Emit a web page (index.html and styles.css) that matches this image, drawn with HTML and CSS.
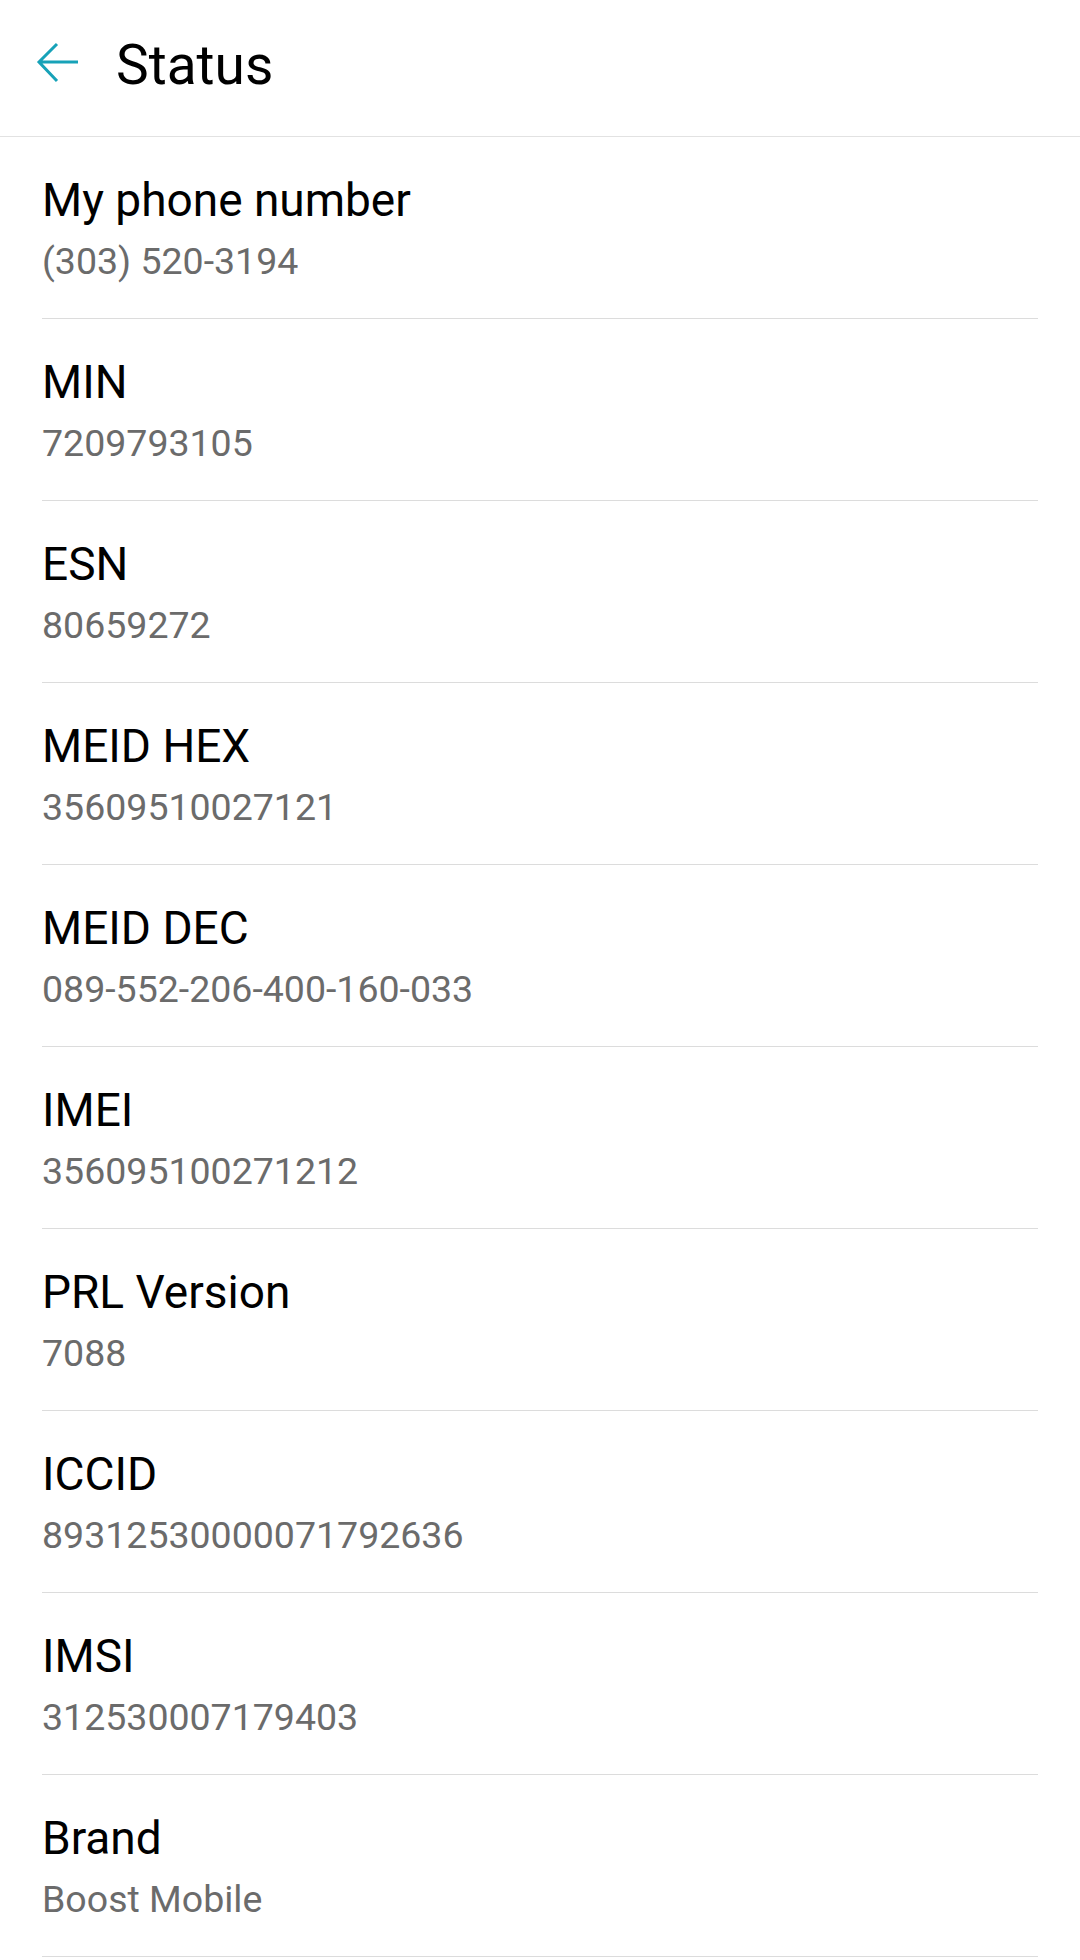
FILE: index.html
```html
<!DOCTYPE html>
<html>
<head>
<meta charset="utf-8">
<link rel="stylesheet" href="styles.css">
</head>
<body>
<header class="appbar">
  <svg class="back" width="44" height="42" viewBox="0 0 44 42">
    <path d="M42 20 H4 M21 2 L3 20 L21 39" fill="none" stroke="#17a2b8" stroke-width="3"/>
  </svg>
  <h1 class="title">Status</h1>
</header>
<main class="list">
  <div class="row"><div class="label">My phone number</div><div class="value">(303) 520-3194</div></div>
  <div class="row"><div class="label">MIN</div><div class="value">7209793105</div></div>
  <div class="row"><div class="label">ESN</div><div class="value">80659272</div></div>
  <div class="row"><div class="label">MEID HEX</div><div class="value">35609510027121</div></div>
  <div class="row"><div class="label">MEID DEC</div><div class="value">089-552-206-400-160-033</div></div>
  <div class="row"><div class="label">IMEI</div><div class="value">356095100271212</div></div>
  <div class="row"><div class="label">PRL Version</div><div class="value">7088</div></div>
  <div class="row"><div class="label">ICCID</div><div class="value">89312530000071792636</div></div>
  <div class="row"><div class="label">IMSI</div><div class="value">312530007179403</div></div>
  <div class="row"><div class="label">Brand</div><div class="value">Boost Mobile</div></div>
</main>
</body>
</html>
```
FILE: styles.css
```css
html, body {
  margin: 0;
  padding: 0;
  background: #ffffff;
  font-family: Roboto, "Noto Sans", "Liberation Sans", sans-serif;
}
.appbar {
  height: 136px;
  border-bottom: 1px solid #e2e2e2;
  display: flex;
  align-items: flex-start;
}
.back {
  margin-left: 36px;
  margin-top: 42px;
  flex: none;
}
.title {
  margin: 33px 0 0 36px;
  font-size: 55px;
  line-height: 64px;
  font-weight: 400;
  color: #000;
}
.list {
  display: flex;
  flex-direction: column;
}
.row {
  margin: 0 42px;
  padding: 37px 0 33px 0;
  border-bottom: 1px solid #dcdcdc;
  display: flex;
  flex-direction: column;
}
.label {
  font-size: 46px;
  line-height: 52px;
  color: #000;
}
.value {
  margin-top: 11px;
  font-size: 37.5px;
  line-height: 48px;
  color: #6b6b6b;
}
```
